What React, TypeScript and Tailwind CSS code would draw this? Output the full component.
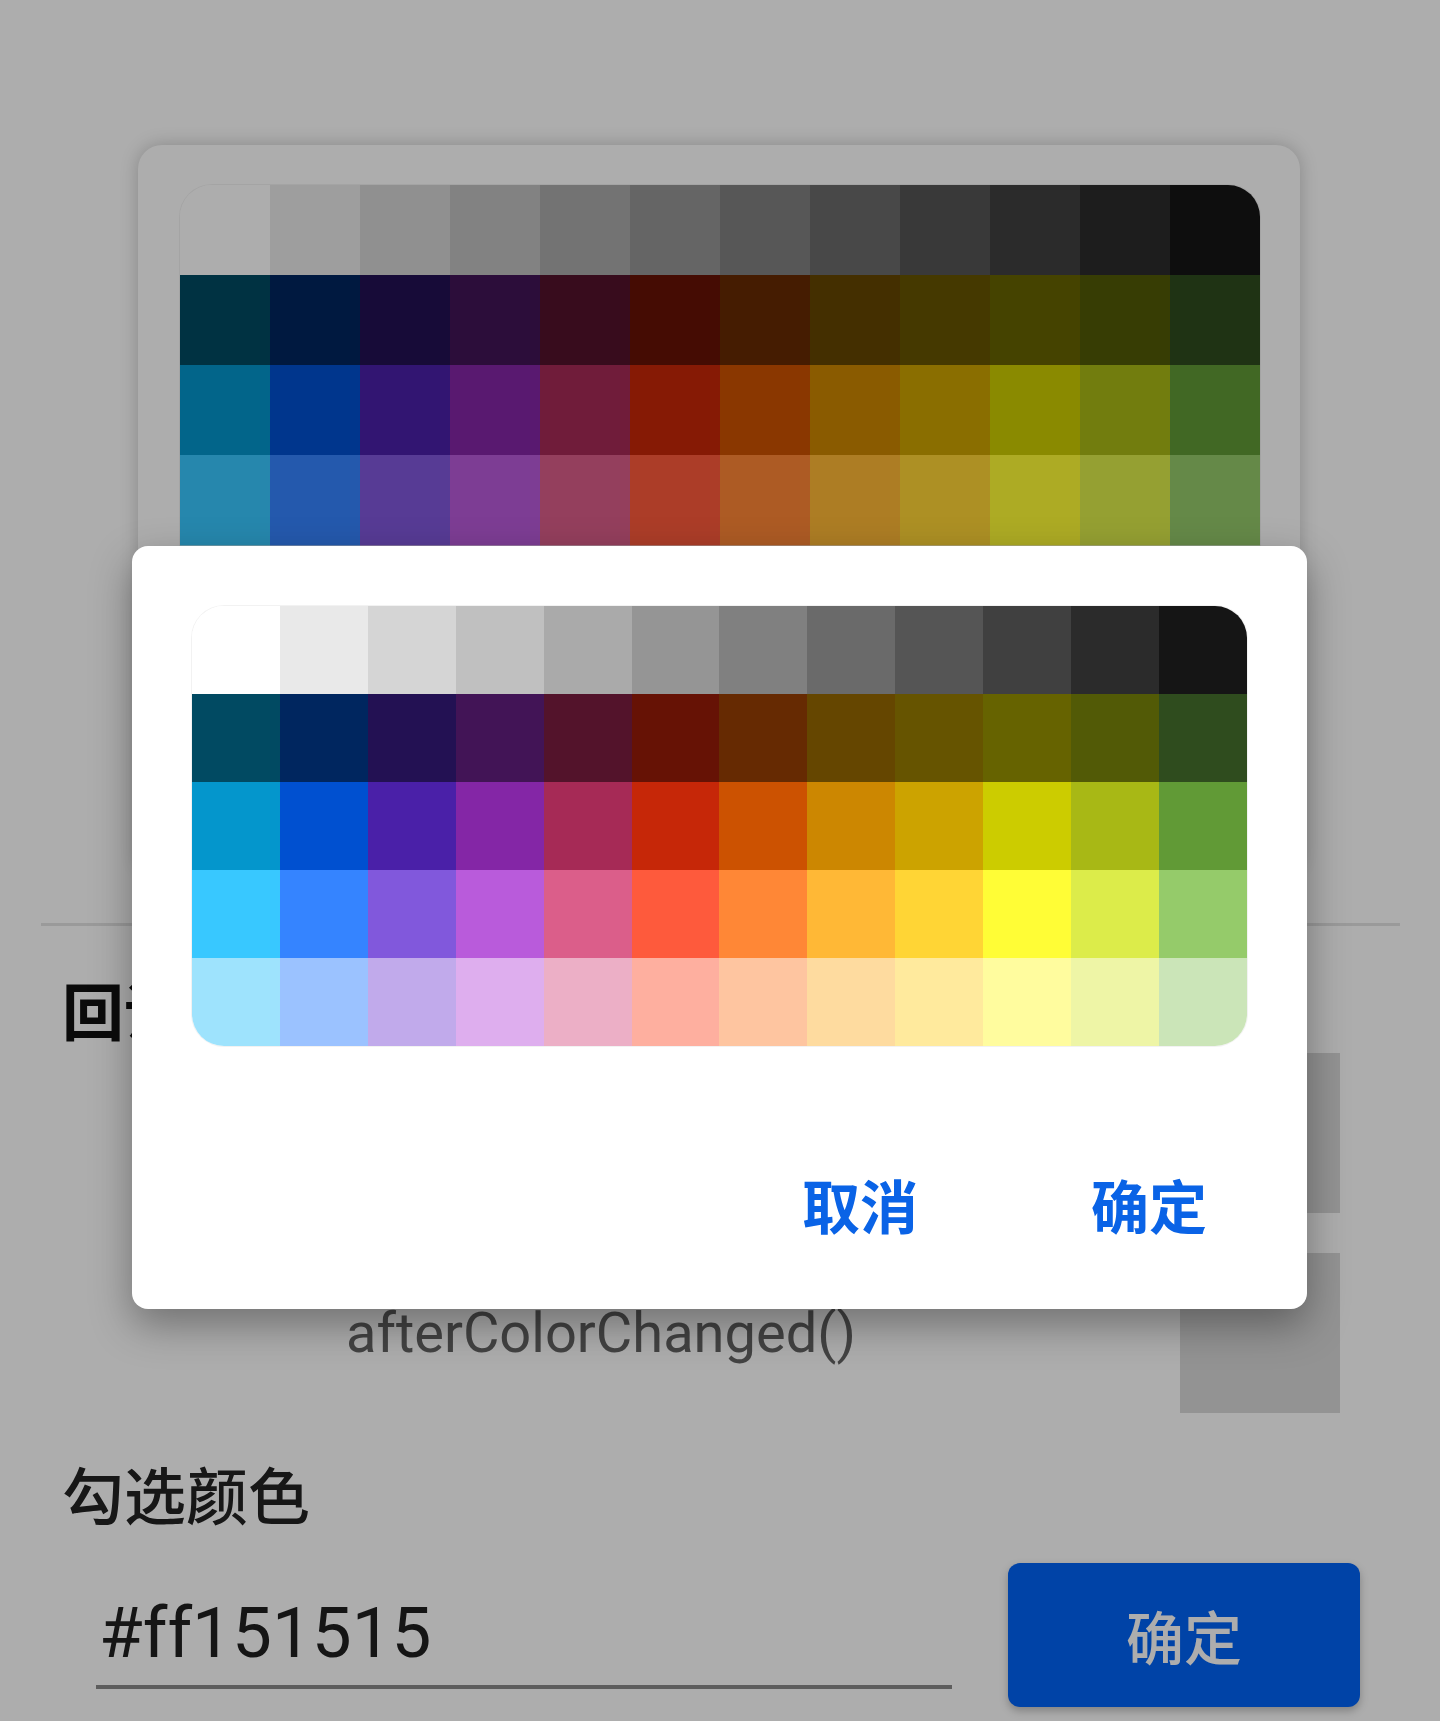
const palette: string[][] = [
  ["bg-[#ffffff]", "bg-[#e9e9e9]", "bg-[#d5d5d5]", "bg-[#c0c0c0]", "bg-[#aaaaaa]", "bg-[#959595]", "bg-[#808080]", "bg-[#6a6a6a]", "bg-[#555555]", "bg-[#404040]", "bg-[#2b2b2b]", "bg-[#151515]"],
  ["bg-[#014a62]", "bg-[#00265f]", "bg-[#231153]", "bg-[#421456]", "bg-[#53132b]", "bg-[#661205]", "bg-[#662a02]", "bg-[#654600]", "bg-[#665400]", "bg-[#666300]", "bg-[#525a06]", "bg-[#2f4c1e]"],
  ["bg-[#0496cc]", "bg-[#0050d0]", "bg-[#4a20a8]", "bg-[#8426a6]", "bg-[#a62a56]", "bg-[#c62708]", "bg-[#cc5201]", "bg-[#cc8701]", "bg-[#cca300]", "bg-[#cccc00]", "bg-[#a8b815]", "bg-[#619a36]"],
  ["bg-[#38c8ff]", "bg-[#3584ff]", "bg-[#8158dc]", "bg-[#b95bdb]", "bg-[#db5e8a]", "bg-[#fe5a3c]", "bg-[#ff8736]", "bg-[#ffb836]", "bg-[#ffd535]", "bg-[#fffd36]", "bg-[#dcec4a]", "bg-[#95cb6a]"],
  ["bg-[#9ee3fd]", "bg-[#9bc2ff]", "bg-[#c1aaeb]", "bg-[#deaeee]", "bg-[#ecafc6]", "bg-[#feaf9f]", "bg-[#fec5a0]", "bg-[#fedb9f]", "bg-[#ffea9d]", "bg-[#fffc9e]", "bg-[#eef5a6]", "bg-[#cbe5b8]"],
];

function ColorGrid({ cellHeight }: { cellHeight: string }) {
  return (
    <div className="grid grid-cols-12 overflow-hidden rounded-[32px] ring-1 ring-black/5">
      {palette.flat().map((color, i) => (
        <div key={i} className={`${cellHeight} ${color}`} />
      ))}
    </div>
  );
}

export default function App() {
  return (
    <div className="relative w-[1440px] h-[1721px] overflow-hidden bg-white font-[Roboto,'Noto_Sans_CJK_SC',sans-serif]">
      {/* page under the dialog */}
      <div className="pt-[145px]">
        <div className="ml-[138px] w-[1162px] h-[730px] rounded-[24px] bg-white pt-[40px] pl-[42px] shadow-[0_0_18px_rgba(0,0,0,0.22)]">
          <div className="w-[1080px]">
            <ColorGrid cellHeight="h-[90px]" />
          </div>
        </div>

        <div className="mt-[48px] ml-[41px] w-[1359px] h-[3px] bg-[#e3e3e3]" />

        <div className="mt-[52px] flex pl-[62px] pr-[100px]">
          <div className="flex-1">
            <h2 className="text-[62px] leading-none font-semibold text-[#111] font-['Noto_Sans_CJK_SC',sans-serif]">
              回调颜色
            </h2>
            <p className="mt-[265px] ml-[284px] text-[56px] leading-none text-[#646464]">
              afterColorChanged()
            </p>
          </div>
          <div className="mt-[75px] flex flex-col gap-[40px]">
            <div className="w-[160px] h-[160px] bg-[#d9d9d9]" />
            <div className="w-[160px] h-[160px] bg-[#d9d9d9]" />
          </div>
        </div>

        <h2 className="mt-[49px] pl-[62px] text-[62px] leading-none font-medium text-[#222] font-['Noto_Sans_CJK_SC',sans-serif]">
          勾选颜色
        </h2>

        <div className="mt-[39px] flex items-start gap-[56px] pl-[96px]">
          <div className="w-[856px] pt-[34px]">
            <div className="pl-[3px] text-[71px] leading-none text-[#1f1f1f]">#ff151515</div>
            <div className="mt-[17px] h-[4px] bg-[#8a8a8a]" />
          </div>
          <button className="w-[352px] h-[144px] rounded-[12px] bg-[#0063f7] text-[58px] font-medium text-white shadow-[0_4px_8px_rgba(0,0,0,0.25)] font-['Noto_Sans_CJK_SC',sans-serif]">
            确定
          </button>
        </div>
      </div>

      {/* scrim */}
      <div className="absolute inset-0 bg-black/[0.32]" />

      {/* dialog */}
      <div className="absolute left-[132px] top-[546px] w-[1175px] h-[763px] rounded-[16px] bg-white pt-[60px] shadow-[0_16px_40px_rgba(0,0,0,0.35)]">
        <div className="px-[60px]">
          <ColorGrid cellHeight="h-[88px]" />
        </div>
        <div className="mt-[129px] flex justify-end gap-[173px] pr-[100px] text-[58px] leading-none font-bold text-[#0a63e6] font-['Noto_Sans_CJK_SC',sans-serif]">
          <span>取消</span>
          <span>确定</span>
        </div>
      </div>
    </div>
  );
}
